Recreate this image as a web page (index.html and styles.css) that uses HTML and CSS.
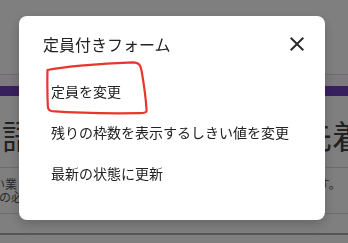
FILE: index.html
```html
<!DOCTYPE html>
<html lang="ja">
<head>
    <meta charset="UTF-8">
    <title>定員付きフォーム</title>
    <link rel="stylesheet" href="styles.css">
</head>
<body>
<div class="page">
    <header class="appbar"></header>
    <div class="strip"></div>
    <main class="card">
        <h1 class="card-title">
            <span>語</span>
            <span>先着</span>
        </h1>
        <div class="card-desc">
            <div class="desc-line desc-first">
                <span>い業</span>
                <span>す。</span>
            </div>
            <div class="desc-line">
                <span>の必</span>
            </div>
        </div>
        <div class="card-foot"></div>
    </main>
</div>

<div class="overlay">
    <div class="dialog">
        <div class="dialog-head">
            <span class="dialog-title">定員付きフォーム</span>
            <svg class="close" viewBox="0 0 24 24" width="24" height="24">
                <path d="M19 6.41 17.59 5 12 10.59 6.41 5 5 6.41 10.59 12 5 17.59 6.41 19 12 13.41 17.59 19 19 17.59 13.41 12z"
                      fill="#2b2b2b"></path>
            </svg>
        </div>
        <ul class="menu">
            <li>定員を変更</li>
            <li>残りの枠数を表示するしきい値を変更</li>
            <li>最新の状態に更新</li>
        </ul>
    </div>
</div>

<!-- hand drawn mark -->
<svg class="mark" viewBox="0 0 348 243" width="348" height="243">
    <path d="M47.5 70 C60 67.5, 95 63.5, 133 62.3 C139 62.3, 140.5 65, 141.8 72 C144 85, 146 100, 146.6 110.5 C146.6 113, 144 113.2, 140 113.2 C110 113.6, 70 112.6, 52 111.2 C48.6 110.8, 48 109, 47.8 106 C47.4 95, 47.2 80, 47.5 70 Z"
          fill="none" stroke="#e8352e" stroke-width="2.2" stroke-linejoin="round"></path>
</svg>
</body>
</html>
```

FILE: styles.css
```css
html,
body {
    margin: 0;
    padding: 0;
}

body {
    width: 348px;
    height: 243px;
    overflow: hidden;
    background-color: #ffffff;
    font-family: "Noto Sans CJK JP", "Noto Sans", sans-serif;
}

.page {
    display: flex;
    flex-direction: column;
}

.appbar {
    height: 74px;
    border-bottom: 1px solid #dcdcdc;
    background-color: #ffffff;
}

.strip {
    height: 11px;
    background-color: #f8f5fc;
}

.card {
    border-top: 10px solid #6f40bd;
    background-color: #ffffff;
}

.card-title {
    display: flex;
    gap: 264px;
    margin: 0;
    padding: 19px 0 12px 2px;
    font-size: 33px;
    font-weight: 400;
    line-height: 40px;
    white-space: nowrap;
    color: #444444;
    border-bottom: 1px solid #dadada;
}

.card-desc {
    padding: 9px 0 10px;
    font-size: 12px;
    line-height: 13px;
    white-space: nowrap;
    color: #555555;
    border-bottom: 1px solid #dadada;
}

.desc-line {
    display: flex;
    gap: 301px;
    margin-left: -1px;
}

.desc-line.desc-first {
    margin-left: -7px;
}

.card-foot {
    height: 19px;
    border-bottom: 2px solid #aaaaaa;
}

.overlay {
    position: fixed;
    top: 0;
    right: 0;
    bottom: 0;
    left: 0;
    display: flex;
    align-items: flex-start;
    padding: 16px 0 0 19px;
    background-color: rgba(0, 0, 0, 0.5);
}

.dialog {
    width: 306px;
    box-sizing: border-box;
    padding: 16px 16px 26px 24px;
    border-radius: 8px;
    background-color: #ffffff;
    box-shadow: 0 4px 12px rgba(0, 0, 0, 0.2);
}

.dialog-head {
    display: flex;
    align-items: center;
    justify-content: space-between;
    height: 24px;
}

.dialog-title {
    font-size: 16px;
    color: #222222;
}

.close {
    display: block;
    width: 24px;
    height: 24px;
}

.menu {
    margin: 15px 0 0;
    padding: 0;
    list-style: none;
}

.menu li {
    height: 41px;
    padding-left: 8px;
    font-size: 14px;
    line-height: 41px;
    white-space: nowrap;
    color: #222222;
}

.mark {
    position: fixed;
    top: 0;
    left: 0;
    pointer-events: none;
}
```
